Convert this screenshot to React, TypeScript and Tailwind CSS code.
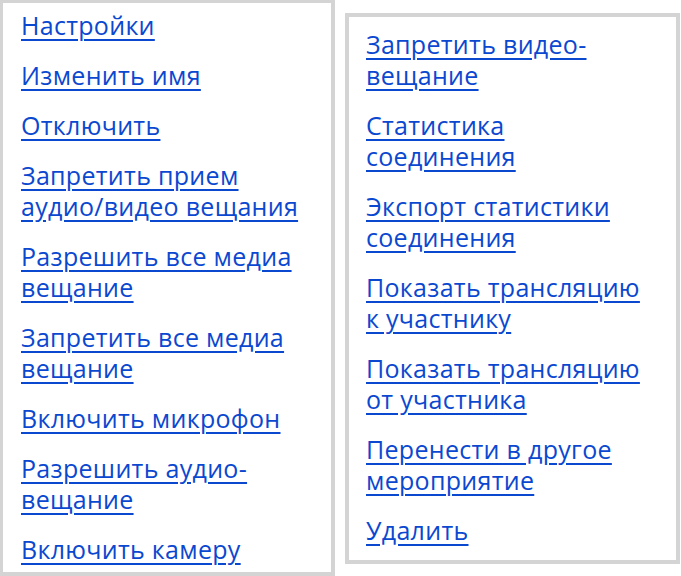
const leftLinks = [
  ['Настройки'],
  ['Изменить имя'],
  ['Отключить'],
  ['Запретить прием', 'аудио/видео вещания'],
  ['Разрешить все медиа', 'вещание'],
  ['Запретить все медиа', 'вещание'],
  ['Включить микрофон'],
  ['Разрешить аудио-', 'вещание'],
  ['Включить камеру'],
];

const rightLinks = [
  ['Запретить видео-', 'вещание'],
  ['Статистика', 'соединения'],
  ['Экспорт статистики', 'соединения'],
  ['Показать трансляцию', 'к участнику'],
  ['Показать трансляцию', 'от участника'],
  ['Перенести в другое', 'мероприятие'],
  ['Удалить'],
];

function LinkList({ items }: { items: string[][] }) {
  return (
    <ul className="flex flex-col gap-[19px]">
      {items.map((lines, i) => (
        <li key={i} className="leading-[31px]">
          <a
            href="#"
            className="text-[#0b48d0] underline decoration-2 underline-offset-[4px]"
          >
            {lines.map((l, j) => (
              <span key={j}>
                {l}
                {j < lines.length - 1 && <br />}
              </span>
            ))}
          </a>
        </li>
      ))}
    </ul>
  );
}

export default function App() {
  return (
    <div
      className="flex w-[681px] h-[576px] overflow-hidden bg-white text-[25px] tracking-[0.3px]"
      style={{ fontFamily: '"Open Sans", "Noto Sans", sans-serif' }}
    >
      <div className="w-[335px] h-[576px] shrink-0 border-[3px] border-r-4 border-b-4 border-[#d4d4d4] pl-[18px] pt-[7px] overflow-hidden">
        <LinkList items={leftLinks} />
      </div>
      <div className="ml-[10px] mt-[13px] w-[335px] h-[551px] shrink-0 border-4 border-[#d4d4d4] pl-[17px] pt-[12px] overflow-hidden">
        <LinkList items={rightLinks} />
      </div>
    </div>
  );
}
